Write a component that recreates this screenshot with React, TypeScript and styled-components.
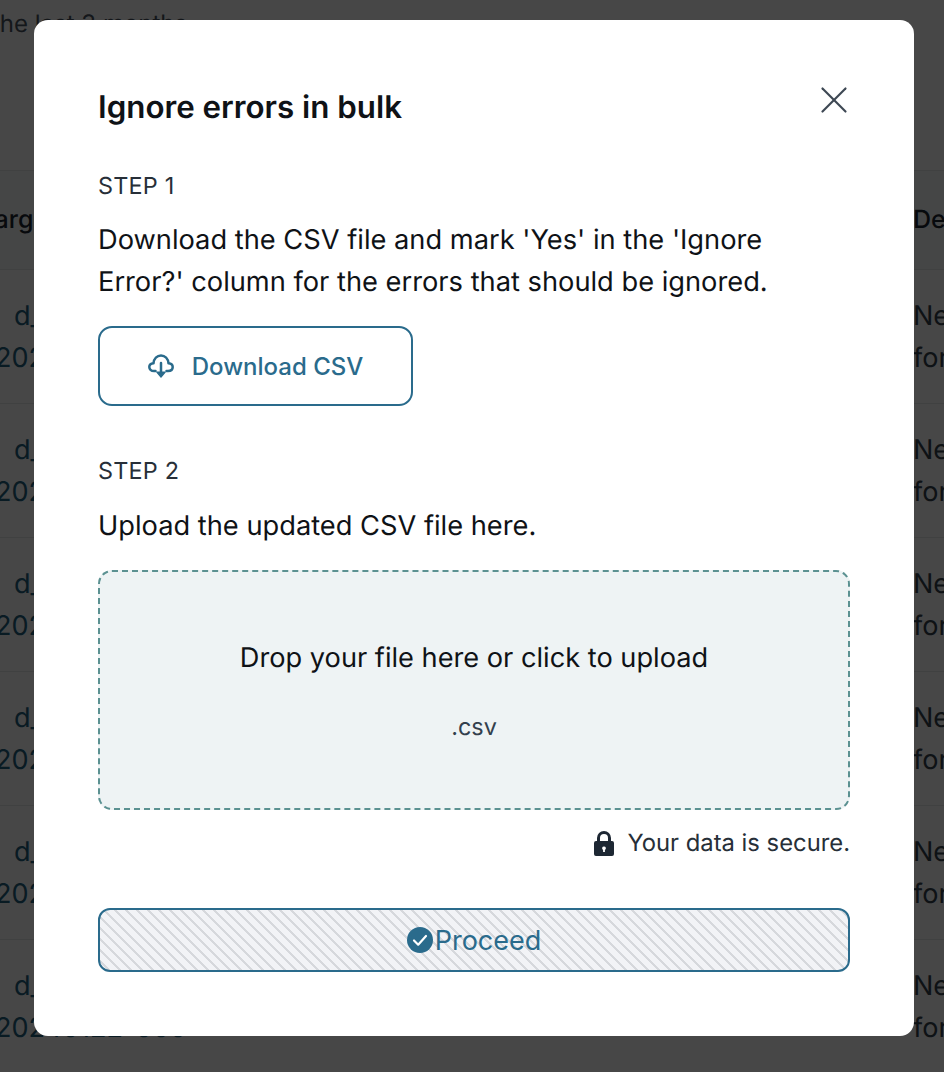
import React from "react";
import styled, { createGlobalStyle } from "styled-components";
import { X } from "lucide-react";

const Global = createGlobalStyle`
  html, body { margin: 0; padding: 0; background: #fff; }
  * { box-sizing: border-box; }
  body { font-family: Inter, "Liberation Sans", sans-serif; text-rendering: geometricPrecision; }
`;

const Page = styled.div`
  width: 944px;
  height: 1072px;
  overflow: hidden;
  position: relative;
  background: #fff;
`;
const Intro = styled.p`
  margin: 0 0 0 -8px;
  height: 170px;
  padding-top: 9px;
  font-size: 24px;
  line-height: 30px;
  color: #4a5560;
  white-space: nowrap;
`;
const HeadRow = styled.div`
  height: 100px;
  display: flex;
  justify-content: space-between;
  align-items: center;
  background: #f8f9fa;
  border-top: 1px solid #e6e8ea;
  border-bottom: 1px solid #e6e8ea;
  font-size: 25px;
  font-weight: 500;
  color: #1b2530;
`;
const HeadLeft = styled.span`
  margin-left: -20px;
`;
const HeadRight = styled.span`
  width: 31px;
  overflow: hidden;
`;
const Row = styled.div`
  height: 134px;
  display: flex;
  justify-content: space-between;
  align-items: center;
  border-bottom: 1px solid #e6e8ea;
  font-size: 27px;
  line-height: 42px;
`;
const LeftCell = styled.div`
  color: #23607f;
  white-space: nowrap;
  margin-left: -5px;
  display: flex;
  flex-direction: column;
`;
const Link = styled.span`
  padding-left: 19px;
`;
const RightCell = styled.div`
  width: 31px;
  color: #33404d;
  white-space: nowrap;
`;
const Overlay = styled.div`
  position: absolute;
  inset: 0;
  background: rgba(0, 0, 0, 0.72);
`;
const Modal = styled.section`
  position: absolute;
  left: 34px;
  top: 20px;
  width: 880px;
  height: 1016px;
  background: #fff;
  border-radius: 14px;
  padding: 68px 64px 0;
  display: flex;
  flex-direction: column;
`;
const Header = styled.header`
  display: flex;
  justify-content: space-between;
  align-items: flex-start;
  height: 38px;
`;
const Title = styled.h2`
  margin: 0;
  font-size: 31.3px;
  line-height: 38px;
  font-weight: 600;
  color: #0f1216;
`;
const Close = styled.button`
  border: 0;
  background: none;
  padding: 0;
  margin: -12px -8px 0 0;
  width: 48px;
  height: 48px;
  color: #3d4753;
  display: flex;
  align-items: center;
  justify-content: center;
`;
const StepLabel = styled.div<{ $top: number }>`
  margin-top: ${(p) => p.$top}px;
  font-size: 23.4px;
  line-height: 28px;
  color: #272f38;
  letter-spacing: 0.2px;
`;
const Body = styled.p<{ $gap: number }>`
  margin: ${(p) => p.$gap}px 0 0;
  font-size: 27.25px;
  line-height: 42px;
  color: #0f1216;
`;
const DownloadButton = styled.button`
  margin-top: 23px;
  width: 315px;
  height: 80px;
  border: 2px solid #2a6b8c;
  border-radius: 14px;
  background: #fff;
  display: flex;
  align-items: center;
  justify-content: center;
  gap: 18px;
  color: #2a6b8c;
  font: 500 24px Inter, sans-serif;
`;
const DropZone = styled.div`
  margin-top: 23px;
  height: 240px;
  border: 2px dashed #5b9191;
  border-radius: 14px;
  background: #eef3f4;
  display: flex;
  flex-direction: column;
  align-items: center;
  padding-top: 68px;
`;
const DropTitle = styled.div`
  font-size: 27.2px;
  line-height: 36px;
  color: #0f1216;
`;
const DropHint = styled.div`
  margin-top: 37px;
  font-size: 23.4px;
  line-height: 28px;
  color: #33404d;
`;
const Secure = styled.div`
  margin-top: 18px;
  display: flex;
  justify-content: flex-end;
  align-items: center;
  gap: 13px;
  font-size: 23.8px;
  line-height: 30px;
  color: #272f38;
`;
const Proceed = styled.button`
  margin-top: 50px;
  height: 64px;
  width: 100%;
  border: 2px solid #2a6b8c;
  border-radius: 12px;
  background: repeating-linear-gradient(45deg, #f2f3f6 0 5.4px, #d6d8dc 5.4px 7.778px);
  display: flex;
  align-items: center;
  justify-content: center;
  gap: 2px;
  color: #2a6b8c;
  font: 400 27px Inter, sans-serif;
`;

const rows = [0, 1, 2, 3, 4, 5];

export default function App() {
  return (
    <Page>
      <Global />
      <Intro>the last 3 months</Intro>
      <HeadRow>
        <HeadLeft>Target</HeadLeft>
        <HeadRight>Description</HeadRight>
      </HeadRow>
      {rows.map((r) => (
        <Row key={r}>
          <LeftCell>
            <Link>d_list</Link>
            <span>20240122-000</span>
          </LeftCell>
          <RightCell>
            Ne
            <br />
            for
          </RightCell>
        </Row>
      ))}
      <Overlay />
      <Modal>
        <Header>
          <Title>Ignore errors in bulk</Title>
          <Close aria-label="Close">
            <X size={46} strokeWidth={1.15} />
          </Close>
        </Header>
        <StepLabel $top={46}>STEP 1</StepLabel>
        <Body $gap={19}>
          Download the CSV file and mark 'Yes' in the 'Ignore
          <br />
          Error?' column for the errors that should be ignored.
        </Body>
        <DownloadButton>
          <svg width="26" height="25" viewBox="0 0 26 25" fill="none" stroke="currentColor" strokeWidth="2.5" strokeLinecap="round" strokeLinejoin="round">
            <path d="M7.5 17H6C3 17 1.3 15.2 1.3 13S3 9.6 5.5 9.3C6 4.8 9 1.5 13 1.5s7 3.3 7.5 7.8C23 9.6 24.7 10.8 24.7 13S23 17 20 17h-1.5" />
            <path d="M13 9v10" />
            <path d="M8.8 18h8.4L13 23.2z" fill="currentColor" strokeWidth="1.2" />
          </svg>
          Download CSV
        </DownloadButton>
        <StepLabel $top={51}>STEP 2</StepLabel>
        <Body $gap={20}>Upload the updated CSV file here.</Body>
        <DropZone>
          <DropTitle>Drop your file here or click to upload</DropTitle>
          <DropHint>.csv</DropHint>
        </DropZone>
        <Secure>
          <svg width="20" height="25" viewBox="0 0 20 25" fill="#1d2733">
            <path d="M3 10V7a7 7 0 0 1 14 0v3h1a2 2 0 0 1 2 2v11a2 2 0 0 1-2 2H2a2 2 0 0 1-2-2V12a2 2 0 0 1 2-2zm3 0h8V7a4 4 0 0 0-8 0zm4 5.5a1.8 1.8 0 0 0-.9 3.4V21h1.8v-2.1a1.8 1.8 0 0 0-.9-3.4z" fillRule="evenodd" />
          </svg>
          Your data is secure.
        </Secure>
        <Proceed>
          <svg width="26" height="26" viewBox="0 0 26 26">
            <circle cx="13" cy="13" r="13" fill="#2a6b8c" />
            <path d="M7 13.5l4.2 4.2L19 9" fill="none" stroke="#fff" strokeWidth="2.2" strokeLinecap="round" strokeLinejoin="round" />
          </svg>
          Proceed
        </Proceed>
      </Modal>
    </Page>
  );
}
